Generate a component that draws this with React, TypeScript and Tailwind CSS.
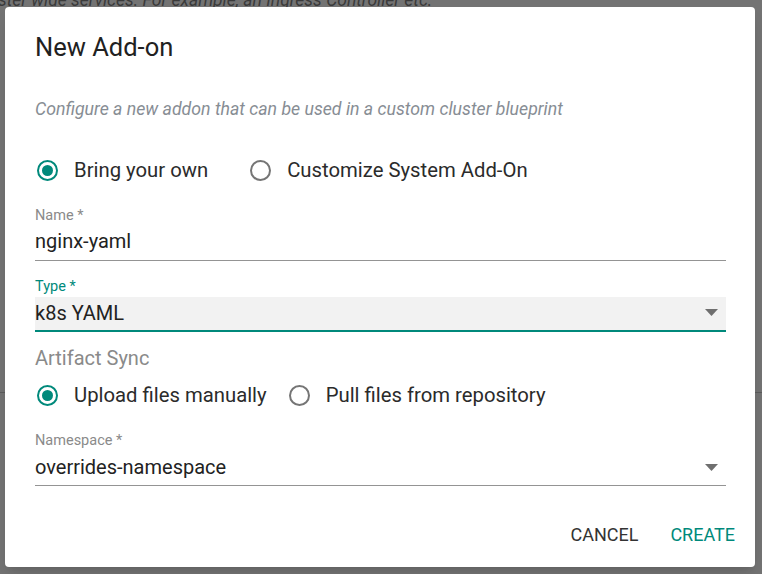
import React from 'react';

const TEAL = 'text-[#00897b]';

const Radio = ({ checked, label }: { checked?: boolean; label: string }) => (
  <div className="flex items-center gap-[16px]">
    <span
      className={`flex h-[21px] w-[21px] items-center justify-center rounded-full border-[2px] ${
        checked ? 'border-[#00897b]' : 'border-[#757575]'
      }`}
    >
      {checked && <span className="h-[11px] w-[11px] rounded-full bg-[#00897b]" />}
    </span>
    <span className="text-[20.3px] leading-[24px] text-[#2b2b2b]">{label}</span>
  </div>
);

const Caret = () => (
  <svg width="13" height="7" viewBox="0 0 13 7" className="mr-[8px]">
    <path d="M0 0h13L6.5 7z" fill="#6f6f6f" />
  </svg>
);

export default function App() {
  return (
    <div
      className="relative h-[574px] w-[762px] overflow-hidden bg-[#737373]"
      style={{ fontFamily: 'Roboto, "Liberation Sans", sans-serif' }}
    >
      {/* page behind the overlay */}
      <div className="absolute left-[-2px] top-[-13px] text-[17.5px] italic text-[#3a3a3a]">
        ster wide services. For example, an Ingress Controller etc.
      </div>
      <div className="absolute left-0 right-0 top-[392px] h-px bg-[#5c5c5c]" />

      <div className="absolute left-[5px] top-[7px] flex h-[560px] w-[750px] flex-col rounded-[4px] bg-white px-[30px] pt-[26px] shadow-lg">
        <h2 className="text-[25.5px] font-normal leading-[28px] text-[#212121]">New Add-on</h2>

        <p className="mt-[36px] text-[17.7px] italic leading-[24px] text-[#878d94]">
          Configure a new addon that can be used in a custom cluster blueprint
        </p>

        <div className="mt-[37px] flex items-center gap-[42px] pl-[2px]">
          <Radio checked label="Bring your own" />
          <Radio label="Customize System Add-On" />
        </div>

        <div className="mt-[26px] mr-[-1px]">
          <div className="text-[14.5px] leading-[16px] text-[#8a8a8a]">Name *</div>
          <div className="mt-[5px] border-b border-[#949494] pb-[7px] text-[20px] leading-[24px] text-[#222]">
            nginx-yaml
          </div>
        </div>

        <div className="mt-[18px] mr-[-1px]">
          <div className={`text-[14.5px] leading-[16px] ${TEAL}`}>Type *</div>
          <div className="mt-[2px] flex h-[35px] items-center justify-between border-b-[2px] border-[#00897b] bg-[#f2f2f2] pb-[2px]">
            <span className="text-[20px] leading-[24px] text-[#222]">k8s YAML</span>
            <Caret />
          </div>
        </div>

        <div className="mt-[14px] text-[20px] leading-[24px] text-[#8a8a8a]">Artifact Sync</div>

        <div className="mt-[13px] flex items-center gap-[22px] pl-[2px]">
          <Radio checked label="Upload files manually" />
          <Radio label="Pull files from repository" />
        </div>

        <div className="mt-[26px] mr-[-1px]">
          <div className="text-[14.5px] leading-[16px] text-[#8a8a8a]">Namespace *</div>
          <div className="mt-[6px] flex items-center justify-between border-b border-[#949494] pb-[6px]">
            <span className="text-[20px] leading-[24px] text-[#222]">overrides-namespace</span>
            <Caret />
          </div>
        </div>

        <div className="mt-auto mb-[20px] flex justify-end gap-[32px]">
          <button className="text-[18px] uppercase leading-[24px] text-[#333]">Cancel</button>
          <button className={`mr-[-10px] text-[18px] uppercase leading-[24px] ${TEAL}`}>Create</button>
        </div>
      </div>
    </div>
  );
}
